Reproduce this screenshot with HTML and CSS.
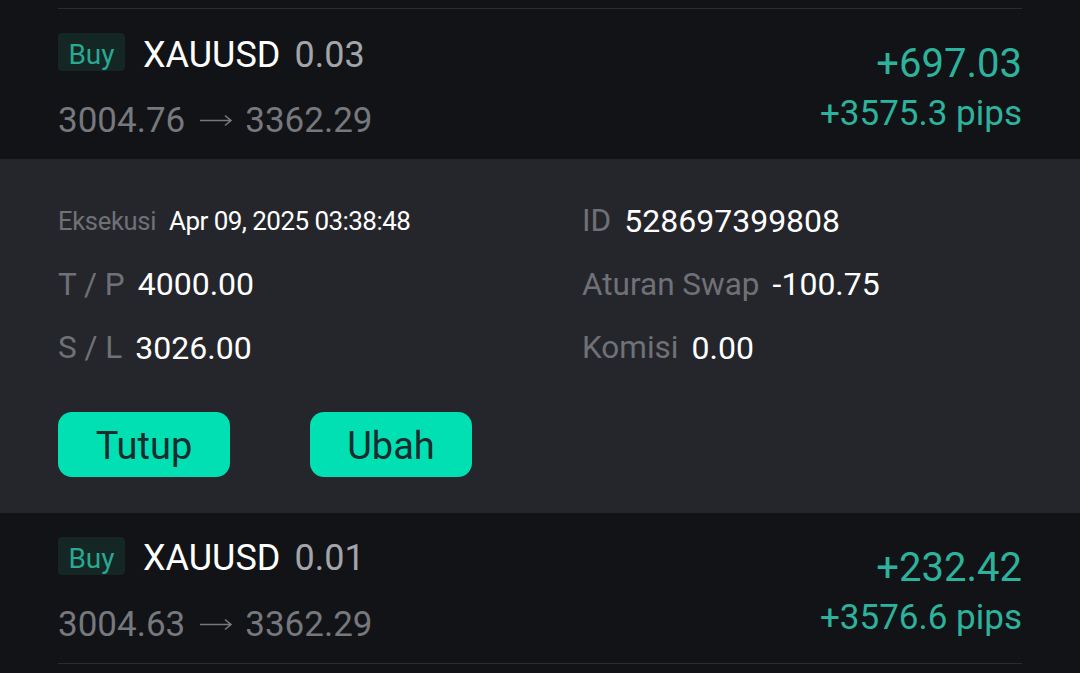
FILE: index.html
```html
<!DOCTYPE html>
<html lang="id">
<head>
<meta charset="utf-8">
<title>Posisi</title>
<link rel="stylesheet" href="styles.css">
</head>
<body>
<div class="list">
  <div class="rule-top"></div>
  <div class="trade">
    <div class="trade-left">
      <div class="title-line">
        <span class="badge">Buy</span>
        <span class="symbol">XAUUSD</span>
        <span class="lots">0.03</span>
      </div>
      <div class="price-line">3004.76<svg class="arrow" width="34" height="14" viewBox="0 0 34 14"><path d="M1 7.5H32M26 2.5L32 7.5L26 12.5" fill="none" stroke="currentColor" stroke-width="1.6"/></svg>3362.29</div>
    </div>
    <div class="trade-right">
      <div class="profit">+697.03</div>
      <div class="pips">+3575.3 pips</div>
    </div>
  </div>

  <div class="details">
    <div class="detail-grid">
      <div class="field"><span class="label small">Eksekusi</span><span class="value small">Apr 09, 2025 03:38:48</span></div>
      <div class="field"><span class="label">ID</span><span class="value">528697399808</span></div>
      <div class="field"><span class="label">T / P</span><span class="value">4000.00</span></div>
      <div class="field"><span class="label">Aturan Swap</span><span class="value">-100.75</span></div>
      <div class="field"><span class="label">S / L</span><span class="value">3026.00</span></div>
      <div class="field"><span class="label">Komisi</span><span class="value">0.00</span></div>
    </div>
    <div class="actions">
      <button class="btn btn-close">Tutup</button>
      <button class="btn">Ubah</button>
    </div>
  </div>

  <div class="trade trade-last">
    <div class="trade-left">
      <div class="title-line">
        <span class="badge">Buy</span>
        <span class="symbol">XAUUSD</span>
        <span class="lots">0.01</span>
      </div>
      <div class="price-line">3004.63<svg class="arrow" width="34" height="14" viewBox="0 0 34 14"><path d="M1 7.5H32M26 2.5L32 7.5L26 12.5" fill="none" stroke="currentColor" stroke-width="1.6"/></svg>3362.29</div>
    </div>
    <div class="trade-right">
      <div class="profit">+232.42</div>
      <div class="pips">+3576.6 pips</div>
    </div>
  </div>
</div>
</body>
</html>
```
FILE: styles.css
```css
* { box-sizing: border-box; }
html, body {
  margin: 0;
  padding: 0;
  background: #121316;
  width: 1080px;
  height: 673px;
  overflow: hidden;
  font-family: Roboto, "Noto Sans", sans-serif;
}
.list { padding-top: 8px; }
.rule-top {
  margin: 0 58px;
  height: 1px;
  background: #2b2d31;
}
.trade {
  margin: 0 58px;
  height: 150px;
  display: flex;
  justify-content: space-between;
  padding-top: 24px;
}
.trade-last {
  height: 151px;
  border-bottom: 1px solid #2b2d31;
}
.title-line {
  display: flex;
  align-items: center;
  height: 38px;
}
.badge {
  width: 67px;
  height: 38px;
  background: #142725;
  border-radius: 4px;
  color: #2aa891;
  font-size: 28px;
  line-height: 38px;
  padding-top: 3px;
  text-align: center;
  margin-right: 18px;
}
.symbol {
  color: #ffffff;
  font-size: 36px;
  line-height: 38px;
  padding-top: 5px;
  margin-right: 14px;
}
.lots {
  color: #a2a5aa;
  font-size: 36px;
  line-height: 38px;
  padding-top: 5px;
}
.price-line {
  margin-top: 30px;
  color: #76787d;
  font-size: 35px;
  line-height: 40px;
  display: flex;
  align-items: center;
}
.arrow {
  margin: 0 12px 0 14px;
  position: relative;
  top: -1px;
}
.trade-right {
  text-align: right;
  color: #2db39d;
}
.profit {
  margin-top: 9px;
  font-size: 40px;
  line-height: 44px;
}
.pips {
  font-size: 35px;
  line-height: 40px;
  margin-top: 8px;
}
.details {
  background: #25262b;
  padding: 30px 58px 36px;
}
.detail-grid {
  display: grid;
  grid-template-columns: 524px 1fr;
  grid-auto-rows: 63.5px;
}
.field {
  display: flex;
  align-items: center;
  gap: 13px;
}
.label {
  color: #6f7177;
  font-size: 31.5px;
}
.value {
  color: #ffffff;
  font-size: 32px;
}
.label.small {
  font-size: 25.5px;
  letter-spacing: -0.3px;
}
.value.small {
  font-size: 26px;
  letter-spacing: -0.55px;
}
.actions {
  display: flex;
  gap: 80px;
  margin-top: 32px;
}
.btn {
  height: 65px;
  border: none;
  border-radius: 14px;
  background: #00e0b3;
  color: #1b2b2e;
  font-family: Roboto, "Noto Sans", sans-serif;
  font-size: 38px;
  padding: 4px 36px 0;
  min-width: 162px;
}
.btn-close { min-width: 172px; }
```
